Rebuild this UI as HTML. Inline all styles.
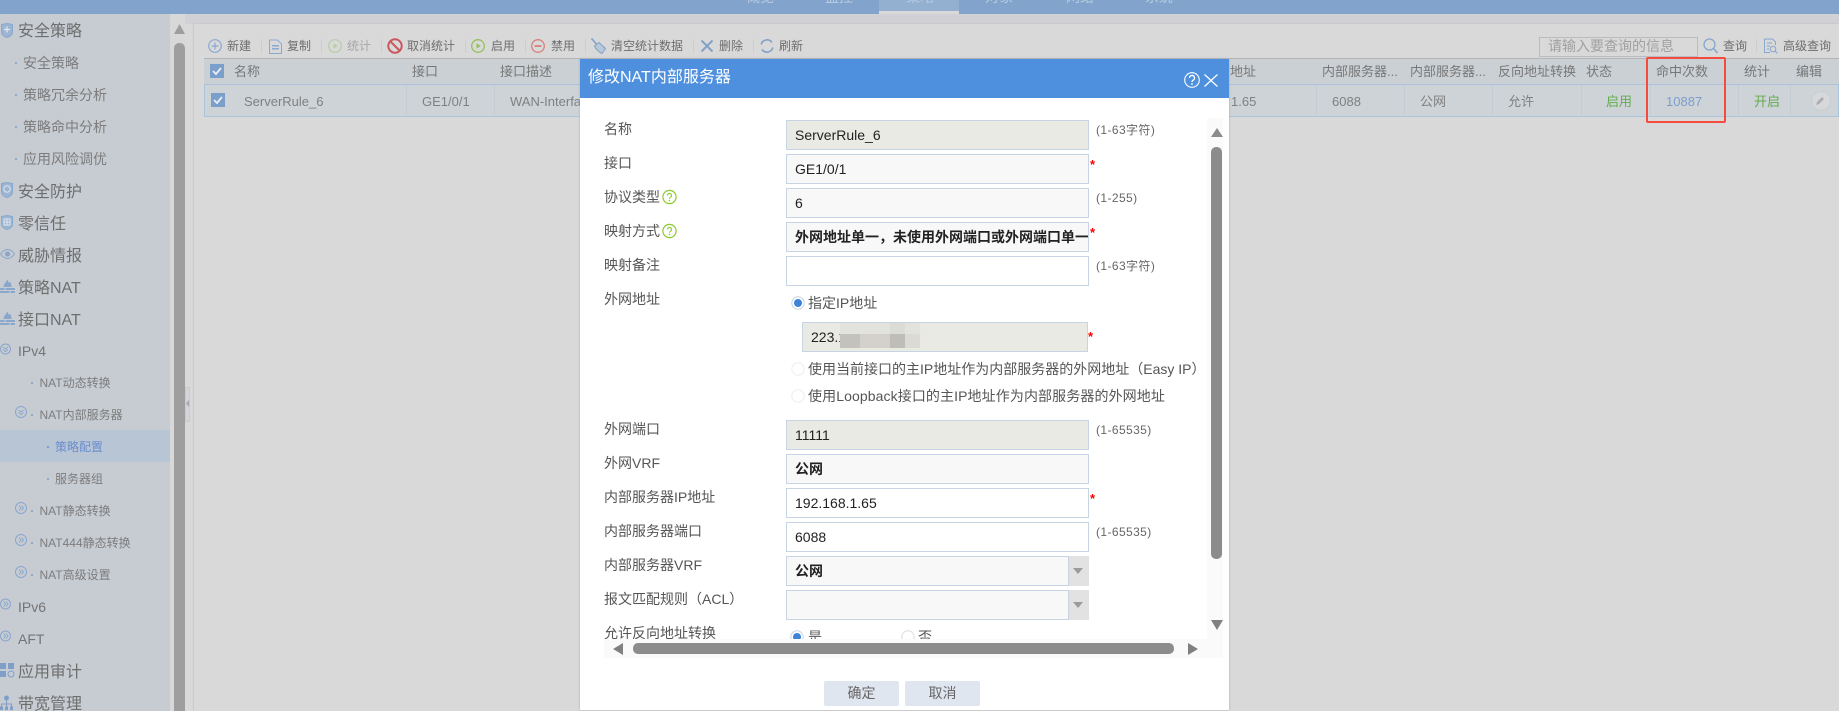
<!DOCTYPE html>
<html lang="zh"><head><meta charset="utf-8"><title>NAT</title>
<style>
html,body{margin:0;padding:0;width:1839px;height:711px;overflow:hidden;background:#d9d9d9}
body{position:relative;font-family:"Liberation Sans","Noto Sans CJK SC",sans-serif;font-size:13px;color:#858585}
div,span,svg{position:absolute}
.t{white-space:nowrap;line-height:20px;height:20px}
.s{font-size:16px;left:18px;color:#6e6e6e}
.m{font-size:14px;left:23px;color:#7c7c7c}
.n{font-size:12px;left:39.500px;color:#7c7c7c}
.p{font-size:12px;left:55px;color:#7c7c7c}
.d{width:2px;height:2px;background:#7f9fc9;border-radius:1px}
.tb{font-size:12px;color:#6e6e6e;top:36px}
.sep{width:1px;height:14px;top:39px;background:#cbcdd0}
.h{font-size:13px;top:62px;color:#777}
.r{font-size:13px;top:92px;color:#808080}
.v{width:1px;height:32px;top:85px;background:#c3ccd3}
.l{font-size:14px;left:604px;color:#555}
.i{box-sizing:border-box;left:786px;width:303px;height:30px;border:1px solid #c6d4e4;background:#fff;color:#222;font-size:14px;line-height:29px;padding-left:8px;white-space:nowrap;overflow:hidden}
.ro{background:#eaeae4}.dis{background:#f8f8f8}
.b{font-weight:bold}
.hint{font-size:12px;left:1096px;color:#666;letter-spacing:.4px}
.star{left:1090px;color:#f00;font-size:13px;font-weight:bold;line-height:14px}
.x{font-size:14px;left:808px;color:#555}
.nav{font-size:14px;top:-13px;color:#b9cce2}
</style></head><body>

<!-- top -->
<div style="left:0;top:0;width:1839px;height:14px;background:#82a4cc"></div>
<div style="left:879px;top:0;width:80px;height:11px;background:#93b0d0"></div>
<div style="left:879px;top:11px;width:80px;height:3px;background:#d9d9d9"></div>
<div style="left:0;top:0;width:1839px;height:11px;overflow:hidden">
<span class="t nav" style="left:746px">概览</span><span class="t nav" style="left:825px">监控</span><span class="t nav" style="left:906px">策略</span><span class="t nav" style="left:985px">对象</span><span class="t nav" style="left:1066px">网络</span><span class="t nav" style="left:1145px">系统</span>
</div>
<div style="left:185px;top:14px;width:1654px;height:10px;background:#d1d1d5"></div>

<!-- sidebar -->
<div style="left:0;top:14px;width:170px;height:697px;background:#c7ccd3"></div>
<div style="left:170px;top:14px;width:15px;height:697px;background:#d8d8d8"></div>
<div style="left:0;top:430px;width:170px;height:32px;background:#b8c5d5"></div>
<svg style="left:174px;top:24px" width="11" height="10"><path d="M5.500 0L11 10H0z" fill="#9e9e9e"/></svg>
<div style="left:174px;top:43px;width:11px;height:668px;background:#9e9e9e;border-radius:5px 5px 0 0"></div>
<div style="left:185px;top:387px;width:5px;height:35px;background:#d3d5d8;box-sizing:border-box;border:1px solid #c8cbd0"></div>
<svg style="left:185px;top:400px" width="5" height="7"><path d="M4 0L1 3.500L4 7z" fill="#a5a8ac"/></svg>

<span class="t s" style="top:22px">安全策略</span>
<span class="t m" style="top:53px">安全策略</span><div class="d" style="left:15px;top:62px"></div>
<span class="t m" style="top:85px">策略冗余分析</span><div class="d" style="left:15px;top:94px"></div>
<span class="t m" style="top:117px">策略命中分析</span><div class="d" style="left:15px;top:126px"></div>
<span class="t m" style="top:149px">应用风险调优</span><div class="d" style="left:15px;top:158px"></div>
<span class="t s" style="top:183px">安全防护</span>
<span class="t s" style="top:215px">零信任</span>
<span class="t s" style="top:247px">威胁情报</span>
<span class="t s" style="top:279px">策略NAT</span>
<span class="t s" style="top:311px">接口NAT</span>
<span class="t" style="top:341px;left:18px;font-size:14px;color:#747474">IPv4</span>
<span class="t n" style="top:373px">NAT动态转换</span><div class="d" style="left:31px;top:382px"></div>
<span class="t n" style="top:405px">NAT内部服务器</span><div class="d" style="left:31px;top:414px"></div>
<span class="t p" style="top:437px;color:#6a8dce">策略配置</span><div class="d" style="left:47px;top:446px;background:#7092ce"></div>
<span class="t p" style="top:469px">服务器组</span><div class="d" style="left:47px;top:478px"></div>
<span class="t n" style="top:501px">NAT静态转换</span><div class="d" style="left:31px;top:510px"></div>
<span class="t n" style="top:533px">NAT444静态转换</span><div class="d" style="left:31px;top:542px"></div>
<span class="t n" style="top:565px">NAT高级设置</span><div class="d" style="left:31px;top:574px"></div>
<span class="t" style="top:597px;left:18px;font-size:14px;color:#747474">IPv6</span>
<span class="t" style="top:629px;left:18px;font-size:14px;color:#747474">AFT</span>
<span class="t s" style="top:663px">应用审计</span>
<span class="t s" style="top:695px">带宽管理</span>

<!-- sidebar icons -->
<svg style="left:1px;top:23px" width="12" height="15" viewBox="0 0 12 15"><path d="M.5 1.500L6 .5l5.500 1V9c0 2.800-2.800 4.600-5.500 5.500C3.300 13.600.5 11.800.5 9z" fill="#9db5d4" stroke="#89a7cc"/><path d="M3 6.500h6M6 3.500v6" stroke="#dfe5ec" stroke-width="1.300"/></svg>
<svg style="left:1px;top:182px" width="12" height="16" viewBox="0 0 12 16"><path d="M.5 1.500L6 .5l5.500 1V10c0 2.800-2.800 4.600-5.500 5.500C3.300 14.600.5 12.800.5 10z" fill="#9db5d4" stroke="#89a7cc"/><circle cx="6" cy="7" r="3.200" fill="none" stroke="#dfe5ec"/></svg>
<svg style="left:1px;top:215px" width="12" height="15" viewBox="0 0 12 15"><path d="M.5 1.500L6 .5l5.500 1V9c0 2.800-2.800 4.600-5.500 5.500C3.300 13.600.5 11.800.5 9z" fill="#9db5d4" stroke="#89a7cc"/><path d="M3 4h6v6H3zM6 4v6M3 7h6" fill="none" stroke="#dfe5ec"/></svg>
<svg style="left:0;top:249px" width="15" height="10" viewBox="0 0 15 10"><path d="M.5 5C3 1.500 5 .5 7.500.5s4.500 1 7 4.500c-2.500 3.500-4.500 4.500-7 4.500S3 8.500.5 5z" fill="none" stroke="#8aa6ca"/><circle cx="7.500" cy="5" r="2.600" fill="#8aa6ca"/></svg>
<svg style="left:0;top:279px" width="15" height="14" viewBox="0 0 15 14"><path d="M7 0c.5 2 1.500 2.500 2 4 .5-.5.800-1 1-1.500.8 1.500 1.500 3 1.500 5.500h-8C3.500 5 6.500 3.500 7 0z" fill="#8aa6ca"/><path d="M0 9h15v5H0z" fill="#8aa6ca"/><path d="M0 11.500h15M5 9v2.500M10 11.500V14" stroke="#c7ccd3"/></svg>
<svg style="left:0;top:311px" width="15" height="14" viewBox="0 0 15 14"><path d="M7 0c.5 2 1.500 2.500 2 4 .5-.5.800-1 1-1.500.8 1.500 1.500 3 1.500 5.500h-8C3.500 5 6.500 3.500 7 0z" fill="#8aa6ca"/><path d="M0 9h15v5H0z" fill="#8aa6ca"/><path d="M0 11.500h15M5 9v2.500M10 11.500V14" stroke="#c7ccd3"/></svg>
<svg style="left:0;top:343px" width="12" height="12" viewBox="0 0 12 12"><circle cx="5.500" cy="6" r="5" fill="none" stroke="#8aa6ca"/><path d="M3 4l2.500 2L8 4M3 6.500l2.500 2 2.500-2" fill="none" stroke="#8aa6ca"/></svg>
<svg style="left:15px;top:406px" width="12" height="12" viewBox="0 0 12 12"><circle cx="6" cy="6" r="5.500" fill="none" stroke="#8aa6ca"/><path d="M3.500 4L6 6l2.500-2M3.500 6.500L6 8.500l2.500-2" fill="none" stroke="#8aa6ca"/></svg>
<svg style="left:15px;top:502px" width="12" height="12" viewBox="0 0 12 12"><circle cx="6" cy="6" r="5.500" fill="none" stroke="#8aa6ca"/><path d="M4 3.500L6 6 4 8.500M6.500 3.500L8.500 6l-2 2.500" fill="none" stroke="#8aa6ca"/></svg>
<svg style="left:15px;top:534px" width="12" height="12" viewBox="0 0 12 12"><circle cx="6" cy="6" r="5.500" fill="none" stroke="#8aa6ca"/><path d="M4 3.500L6 6 4 8.500M6.500 3.500L8.500 6l-2 2.500" fill="none" stroke="#8aa6ca"/></svg>
<svg style="left:15px;top:566px" width="12" height="12" viewBox="0 0 12 12"><circle cx="6" cy="6" r="5.500" fill="none" stroke="#8aa6ca"/><path d="M4 3.500L6 6 4 8.500M6.500 3.500L8.500 6l-2 2.500" fill="none" stroke="#8aa6ca"/></svg>
<svg style="left:0;top:598px" width="12" height="12" viewBox="0 0 12 12"><circle cx="5.500" cy="6" r="5" fill="none" stroke="#8aa6ca"/><path d="M3.500 3.500L5.500 6l-2 2.500M6 3.500L8 6 6 8.500" fill="none" stroke="#8aa6ca"/></svg>
<svg style="left:0;top:630px" width="12" height="12" viewBox="0 0 12 12"><circle cx="5.500" cy="6" r="5" fill="none" stroke="#8aa6ca"/><path d="M3.500 3.500L5.500 6l-2 2.500M6 3.500L8 6 6 8.500" fill="none" stroke="#8aa6ca"/></svg>
<svg style="left:0;top:663px" width="15" height="15" viewBox="0 0 15 15"><path d="M0 0h6v6H0zM8 0h6v6H8zM0 8h6v6H0z" fill="#7f9fc9"/><circle cx="11" cy="11" r="3" fill="none" stroke="#7f9fc9"/></svg>
<svg style="left:0;top:695px" width="13" height="15" viewBox="0 0 13 15"><circle cx="6.500" cy="3" r="2.500" fill="#7f9fc9"/><path d="M6.500 5v4M1.500 12V9h10v3M6.500 9v3" fill="none" stroke="#7f9fc9"/><path d="M0 11.500h3V15H0zM5 11.500h3V15H5zM10 11.500h3V15h-3z" fill="#7f9fc9"/></svg>

<!-- panel -->
<div style="left:194px;top:24px;width:1645px;height:687px;background:#d9d9d9;box-shadow:-1px -1px 1px #c8c8cc"></div>

<!-- toolbar -->
<svg style="left:208px;top:39px" width="14" height="14" viewBox="0 0 14 14"><circle cx="7" cy="7" r="6.300" fill="none" stroke="#8aa9d0" stroke-width="1.200"/><path d="M3.500 7h7M7 3.500v7" stroke="#8aa9d0" stroke-width="1.200"/></svg>
<span class="t tb" style="left:227px">新建</span><div class="sep" style="left:261px"></div>
<svg style="left:269px;top:39px" width="13" height="15" viewBox="0 0 13 15"><path d="M.5 1h8l4 4v9.500H.5z" fill="none" stroke="#8aa9d0"/><path d="M3 6h7v1.500H3zM3 9h7v1.500H3z" fill="#8aa9d0"/></svg>
<span class="t tb" style="left:287px">复制</span><div class="sep" style="left:321px"></div>
<svg style="left:328px;top:39px" width="14" height="14" viewBox="0 0 14 14"><circle cx="7" cy="7" r="6.300" fill="none" stroke="#b6cfa3" stroke-width="1.200"/><path d="M5.500 4.200L9.800 7l-4.300 2.800z" fill="#b6cfa3"/></svg>
<span class="t tb" style="left:347px;color:#a6a6a6">统计</span><div class="sep" style="left:381px"></div>
<svg style="left:387px;top:38px" width="16" height="16" viewBox="0 0 16 16"><circle cx="8" cy="8" r="6.700" fill="none" stroke="#c9595f" stroke-width="2"/><path d="M3.500 3.500l9 9" stroke="#c9595f" stroke-width="2"/></svg>
<span class="t tb" style="left:407px">取消统计</span><div class="sep" style="left:465px"></div>
<svg style="left:471px;top:39px" width="14" height="14" viewBox="0 0 14 14"><circle cx="7" cy="7" r="6.300" fill="none" stroke="#95c05f" stroke-width="1.300"/><path d="M5.500 4.200L9.800 7l-4.300 2.800z" fill="#95c05f"/></svg>
<span class="t tb" style="left:491px">启用</span><div class="sep" style="left:525px"></div>
<svg style="left:531px;top:39px" width="14" height="14" viewBox="0 0 14 14"><circle cx="7" cy="7" r="6.300" fill="none" stroke="#d8807a" stroke-width="1.300"/><path d="M3.500 7h7" stroke="#d8807a" stroke-width="1.800"/></svg>
<span class="t tb" style="left:551px">禁用</span><div class="sep" style="left:585px"></div>
<svg style="left:591px;top:38px" width="15" height="16" viewBox="0 0 15 16"><path d="M.5.500l5 5.500" stroke="#7fa0c8" stroke-width="1.600"/><path d="M3.500 8L8 4.500l6.500 6-3.500 5c-2.500-1-6-4-7.500-7.500z" fill="#b9c9da" stroke="#7fa0c8"/></svg>
<span class="t tb" style="left:611px">清空统计数据</span><div class="sep" style="left:693px"></div>
<svg style="left:701px;top:40px" width="12" height="12" viewBox="0 0 12 12"><path d="M.5.500l11 11M11.500.500l-11 11" stroke="#7fa0c8" stroke-width="2"/></svg>
<span class="t tb" style="left:719px">删除</span><div class="sep" style="left:753px"></div>
<svg style="left:760px;top:39px" width="14" height="14" viewBox="0 0 14 14"><path d="M1.200 5.500A6 6 0 0 1 12 3.500M12.800 8.500A6 6 0 0 1 2 10.500" fill="none" stroke="#7fa0c8" stroke-width="1.600"/></svg>
<span class="t tb" style="left:779px">刷新</span>

<!-- search -->
<div style="left:1539px;top:37px;width:157px;height:18px;border:1px solid #b9bdc1"></div>
<span class="t" style="left:1548px;top:36px;font-size:14px;color:#a0a0a0">请输入要查询的信息</span>
<svg style="left:1703px;top:38px" width="15" height="16" viewBox="0 0 15 16"><circle cx="6.500" cy="6.500" r="5.500" fill="none" stroke="#86a7cf" stroke-width="1.300"/><path d="M10.500 10.500l4 4.500" stroke="#86a7cf" stroke-width="1.600"/></svg>
<span class="t tb" style="left:1723px;font-size:12px">查询</span><div class="sep" style="left:1756px"></div>
<svg style="left:1764px;top:38px" width="14" height="16" viewBox="0 0 14 16"><path d="M.5 1h8l3 3v3M.5 1v13.500H6" fill="none" stroke="#86a7cf"/><path d="M3 5h5M3 8h3M3 11h2" stroke="#86a7cf"/><circle cx="9" cy="11" r="2.800" fill="none" stroke="#86a7cf"/><path d="M11 13l2.500 2.500" stroke="#86a7cf"/></svg>
<span class="t tb" style="left:1783px;font-size:12px">高级查询</span>

<!-- table -->
<div style="left:204px;top:58px;width:1635px;height:26px;background:#cbd0d4;border-top:1px solid #b3b5b8;box-sizing:border-box"></div>
<div style="left:204px;top:84px;width:1635px;height:33px;box-sizing:border-box;background:#cdd3d7;border:1px solid #abc4de"></div>
<div style="left:210px;top:64px;width:14px;height:14px;background:#7b9fcb"></div>
<svg style="left:210px;top:64px" width="14" height="14"><path d="M3 7l3 3 5-6" fill="none" stroke="#e8edf2" stroke-width="1.800"/></svg>
<div style="left:211px;top:93px;width:14px;height:14px;background:#7b9fcb"></div>
<svg style="left:211px;top:93px" width="14" height="14"><path d="M3 7l3 3 5-6" fill="none" stroke="#e8edf2" stroke-width="1.800"/></svg>
<span class="t h" style="left:234px">名称</span><span class="t h" style="left:412px">接口</span><span class="t h" style="left:500px">接口描述</span>
<span class="t h" style="left:1230px">地址</span>
<span class="t h" style="left:1322px">内部服务器...</span><span class="t h" style="left:1410px">内部服务器...</span>
<span class="t h" style="left:1498px">反向地址转换</span><span class="t h" style="left:1586px">状态</span>
<span class="t h" style="left:1656px">命中次数</span><span class="t h" style="left:1744px">统计</span><span class="t h" style="left:1796px">编辑</span>
<div class="v" style="left:406px"></div><div class="v" style="left:494px"></div>
<div class="v" style="left:1316px"></div><div class="v" style="left:1404px"></div><div class="v" style="left:1492px"></div><div class="v" style="left:1581px"></div><div class="v" style="left:1650px"></div><div class="v" style="left:1738px"></div><div class="v" style="left:1790px"></div>
<span class="t r" style="left:244px">ServerRule_6</span><span class="t r" style="left:422px">GE1/0/1</span><span class="t r" style="left:510px">WAN-Interface</span>
<span class="t r" style="left:1231px">1.65</span><span class="t r" style="left:1332px">6088</span><span class="t r" style="left:1420px">公网</span><span class="t r" style="left:1508px">允许</span>
<span class="t r" style="left:1606px;color:#64ab52">启用</span><span class="t r" style="left:1666px;color:#7c9ecd">10887</span><span class="t r" style="left:1754px;color:#64ab52">开启</span>
<div style="left:1811px;top:91px;width:18px;height:18px;border-radius:50%;background:#d6d8da;border:1px solid #c8cdd2"></div>
<svg style="left:1815px;top:95px" width="11" height="11" viewBox="0 0 11 11"><path d="M1 10l1-3 5-5 2 2-5 5z" fill="#a9acb0"/></svg>
<div style="left:1646px;top:57px;width:76px;height:62px;border:2px solid #f44b3e;border-radius:2px"></div>

<!-- dialog -->
<div style="left:580px;top:59px;width:649px;height:651px;background:#fff;box-shadow:0 0 2px #aaa"></div>
<div style="left:580px;top:59px;width:649px;height:39px;background:#4f90de"></div>
<span class="t" style="left:588px;top:68px;font-size:16px;color:#fff">修改NAT内部服务器</span>
<svg style="left:1184px;top:72px" width="16" height="16" viewBox="0 0 16 16"><circle cx="8" cy="8" r="7.300" fill="none" stroke="#fff" stroke-width="1.100"/><path d="M5.500 6a2.500 2.500 0 1 1 3.600 2.200c-.8.400-1.100.9-1.100 1.800" fill="none" stroke="#fff" stroke-width="1.300"/><circle cx="8" cy="12" r=".9" fill="#fff"/></svg>
<svg style="left:1204px;top:74px" width="14" height="13" viewBox="0 0 14 13"><path d="M.5.500l13 12M13.500.500l-13 12" stroke="#fff" stroke-width="1.200"/></svg>

<span class="t l" style="top:119px">名称</span>
<span class="t l" style="top:153px">接口</span>
<span class="t l" style="top:187px">协议类型</span>
<span class="t l" style="top:221px">映射方式</span>
<span class="t l" style="top:255px">映射备注</span>
<span class="t l" style="top:289px">外网地址</span>
<span class="t l" style="top:419px">外网端口</span>
<span class="t l" style="top:453px">外网VRF</span>
<span class="t l" style="top:487px">内部服务器IP地址</span>
<span class="t l" style="top:521px">内部服务器端口</span>
<span class="t l" style="top:555px">内部服务器VRF</span>
<span class="t l" style="top:589px">报文匹配规则（ACL）</span>
<div style="left:604px;top:623px;width:176px;height:16px;overflow:hidden"><span class="t" style="left:0;top:0;font-size:14px;color:#555">允许反向地址转换</span></div>

<svg style="left:662px;top:189px" width="15" height="16" viewBox="0 0 15 16"><circle cx="7.500" cy="8" r="6.600" fill="none" stroke="#8ccb2e" stroke-width="1.200"/><path d="M5.500 6.500a2 2 0 1 1 3 1.700c-.7.400-1 .8-1 1.500" fill="none" stroke="#8ccb2e" stroke-width="1.100"/><circle cx="7.500" cy="11.500" r=".8" fill="#8ccb2e"/></svg>
<svg style="left:662px;top:223px" width="15" height="16" viewBox="0 0 15 16"><circle cx="7.500" cy="8" r="6.600" fill="none" stroke="#8ccb2e" stroke-width="1.200"/><path d="M5.500 6.500a2 2 0 1 1 3 1.700c-.7.400-1 .8-1 1.500" fill="none" stroke="#8ccb2e" stroke-width="1.100"/><circle cx="7.500" cy="11.500" r=".8" fill="#8ccb2e"/></svg>

<div class="i ro" style="top:120px">ServerRule_6</div>
<div class="i dis" style="top:154px">GE1/0/1</div>
<div class="i dis" style="top:188px">6</div>
<div class="i dis b" style="top:222px;padding-right:0">外网地址单一，未使用外网端口或外网端口单一</div>
<div class="i" style="top:256px"></div>
<div class="i ro" style="top:420px">11111</div>
<div class="i dis b" style="top:454px">公网</div>
<div class="i" style="top:488px">192.168.1.65</div>
<div class="i" style="top:522px">6088</div>
<div class="i dis b" style="top:556px;width:283px">公网</div>
<div style="left:1069px;top:556px;width:20px;height:30px;background:#e2e2e2"></div>
<svg style="left:1073px;top:568px" width="10" height="6"><path d="M0 0h10L5 6z" fill="#9b9b9b"/></svg>
<div class="i dis" style="top:590px;width:283px"></div>
<div style="left:1069px;top:590px;width:20px;height:30px;background:#e2e2e2"></div>
<svg style="left:1073px;top:602px" width="10" height="6"><path d="M0 0h10L5 6z" fill="#9b9b9b"/></svg>

<span class="t hint" style="top:120px">(1-63字符)</span>
<span class="t hint" style="top:188px">(1-255)</span>
<span class="t hint" style="top:256px">(1-63字符)</span>
<span class="t hint" style="top:420px">(1-65535)</span>
<span class="t hint" style="top:522px">(1-65535)</span>
<span class="star" style="top:158px">*</span><span class="star" style="top:226px">*</span><span class="star" style="top:330px;left:1088px">*</span><span class="star" style="top:492px">*</span>

<!-- radios -->
<svg style="left:791px;top:296px" width="14" height="14"><circle cx="7" cy="7" r="6.200" fill="#fff" stroke="#c6d4e4"/><circle cx="7" cy="7" r="4" fill="#3d83d9"/></svg>
<span class="t x" style="top:293px">指定IP地址</span>
<div class="i ro" style="left:802px;top:322px;width:286px;height:30px">223.1</div>
<div style="left:840px;top:323px;width:85px;height:11px;background:#e3e3de"></div>
<div style="left:890px;top:323px;width:15px;height:11px;background:#dcdcd7"></div>
<div style="left:920px;top:323px;width:5px;height:11px;background:#e9e9e3"></div>
<div style="left:840px;top:334px;width:20px;height:14px;background:#c4c2bc"></div>
<div style="left:860px;top:334px;width:30px;height:14px;background:#d4d1cc"></div>
<div style="left:890px;top:334px;width:15px;height:14px;background:#bfbdb7"></div>
<div style="left:905px;top:334px;width:15px;height:14px;background:#dbdad5"></div>
<svg style="left:791px;top:362px" width="14" height="14"><circle cx="7" cy="7" r="6.200" fill="#fff" stroke="#eee"/></svg>
<span class="t x" style="top:359px">使用当前接口的主IP地址作为内部服务器的外网地址（Easy IP）</span>
<svg style="left:791px;top:389px" width="14" height="14"><circle cx="7" cy="7" r="6.200" fill="#fff" stroke="#eee"/></svg>
<span class="t x" style="top:386px;letter-spacing:.1px">使用Loopback接口的主IP地址作为内部服务器的外网地址</span>
<div style="left:786px;top:620px;width:200px;height:19px;overflow:hidden">
<svg style="left:4px;top:10px" width="14" height="14"><circle cx="7" cy="7" r="6.200" fill="#fff" stroke="#c6d4e4"/><circle cx="7" cy="7" r="4" fill="#3d83d9"/></svg>
<span class="t" style="left:22px;top:7px;font-size:14px;color:#555">是</span>
<svg style="left:115px;top:10px" width="14" height="14"><circle cx="7" cy="7" r="6.200" fill="#fff" stroke="#ddd"/></svg>
<span class="t" style="left:132px;top:7px;font-size:14px;color:#555">否</span>
</div>

<!-- scrollbars -->
<div style="left:1207px;top:118px;width:16px;height:521px;background:#fafafa"></div>
<svg style="left:1211px;top:128px" width="12" height="9"><path d="M6 0l6 9H0z" fill="#8c8c8c"/></svg>
<div style="left:1211px;top:147px;width:11px;height:412px;background:#8c8c8c;border-radius:5px"></div>
<svg style="left:1211px;top:620px" width="12" height="10"><path d="M0 0h12L6 10z" fill="#808080"/></svg>
<div style="left:604px;top:639px;width:619px;height:19px;background:#fafafa"></div>
<svg style="left:613px;top:643px" width="10" height="12"><path d="M10 0v12L0 6z" fill="#808080"/></svg>
<div style="left:633px;top:643px;width:541px;height:11px;background:#8c8c8c;border-radius:5px"></div>
<svg style="left:1188px;top:643px" width="10" height="12"><path d="M0 0v12l10-6z" fill="#808080"/></svg>

<!-- buttons -->
<div style="left:824px;top:681px;width:75px;height:25px;background:#e0e6f0;color:#666;font-size:14px;line-height:25px;text-align:center;border-radius:2px">确定</div>
<div style="left:905px;top:681px;width:75px;height:25px;background:#e0e6f0;color:#666;font-size:14px;line-height:25px;text-align:center;border-radius:2px">取消</div>
</body></html>
